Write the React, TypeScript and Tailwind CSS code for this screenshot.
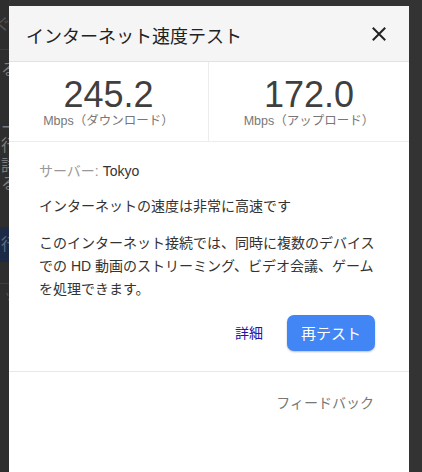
const font = "font-['Liberation_Sans','Noto_Sans_CJK_JP',sans-serif]";

function PageBehind() {
  // dimmed page peeking out on the left of the dialog
  return (
    <div className="w-[9px] shrink-0 overflow-hidden bg-[#2e2e2e] text-[16px] leading-[18px] text-[#7c7c7c]">
      <div className="flex h-[50px] items-center justify-end border-b border-[#3d3d3d]">
        <span className="-mr-[2px] text-[#555]">ぐ</span>
      </div>
      <div className="mt-[11px] flex justify-end">
        <span className="-mr-[8px]">る</span>
      </div>
      <div className="mt-[40px] flex flex-col items-end">
        <span className="-mr-[8px]">ー</span>
        <span className="-mr-[8px]">行</span>
        <span className="-mr-[8px] mt-[2px]">詳</span>
        <span className="-mr-[8px]">る</span>
      </div>
      <div className="mt-[34px] flex h-[35px] items-center justify-end bg-[#1c2a45]">
        <span className="-mr-[8px] text-[#5a6a86]">行</span>
      </div>
      <div className="mt-[21px] flex h-[22px] items-center justify-end border-t border-[#3d3d3d]">
        <span className="-mr-[8px] text-[13px] text-[#555]">ッ</span>
      </div>
    </div>
  );
}

function Stat({ value, label, divider }: { value: string; label: string; divider?: boolean }) {
  return (
    <div className={`flex flex-col items-center pt-[13px] ${divider ? 'border-r border-[#ececec]' : ''}`}>
      <div className="text-[36px] leading-[40px] text-[#3f3f3f]">{value}</div>
      <div className="-mt-[2px] text-[12.5px] leading-[16px] text-[#777]">{label}</div>
    </div>
  );
}

export default function App() {
  return (
    <div className={`flex h-[472px] w-[422px] overflow-hidden bg-[#333] ${font}`}>
      <PageBehind />
      <div className="mt-[6px] flex w-[400px] shrink-0 flex-col bg-white">
        <div className="flex h-[56px] items-center justify-between border-b border-[#e2e2e2] bg-[#f5f5f5] pl-[17px] pr-[20px]">
          <h1 className="pt-[6px] text-[18px] leading-[24px] text-[#222]">インターネット速度テスト</h1>
          <button className="flex h-[20px] w-[20px] items-center justify-center">
            <svg width="14" height="14" viewBox="0 0 14 14" stroke="#222" strokeWidth="2" strokeLinecap="square">
              <path d="M1.5 1.5l11 11M12.5 1.5l-11 11" />
            </svg>
          </button>
        </div>

        <div className="grid h-[80px] grid-cols-2 border-b border-[#ececec]">
          <Stat value="245.2" label="Mbps（ダウンロード）" divider />
          <Stat value="172.0" label="Mbps（アップロード）" />
        </div>

        <div className="px-[30px] pt-[18px] text-[14px] leading-[23px] text-[#333]">
          <p>
            <span className="text-[#999]">サーバー:</span> Tokyo
          </p>
          <p className="mt-[12px]">インターネットの速度は非常に高速です</p>
          <p className="mt-[14px] whitespace-nowrap">
            このインターネット接続では、同時に複数のデバイス
            <br />
            での HD 動画のストリーミング、ビデオ会議、ゲーム
            <br />
            を処理できます。
          </p>
          <div className="mt-[14px] flex items-center justify-end gap-[24px] pr-[4px]">
            <button className="text-[14px] text-[#1f14a6]">詳細</button>
            <button className="h-[36px] w-[88px] rounded-[7px] bg-[#4285f4] text-[15px] text-white shadow-[0_1px_2px_rgba(0,0,0,0.25)]">
              再テスト
            </button>
          </div>
        </div>

        <div className="mt-[20px] border-t border-[#e8e8e8] pr-[35px] pt-[20px] text-right text-[14px] leading-[23px] text-[#777]">
          フィードバック
        </div>
      </div>
    </div>
  );
}
